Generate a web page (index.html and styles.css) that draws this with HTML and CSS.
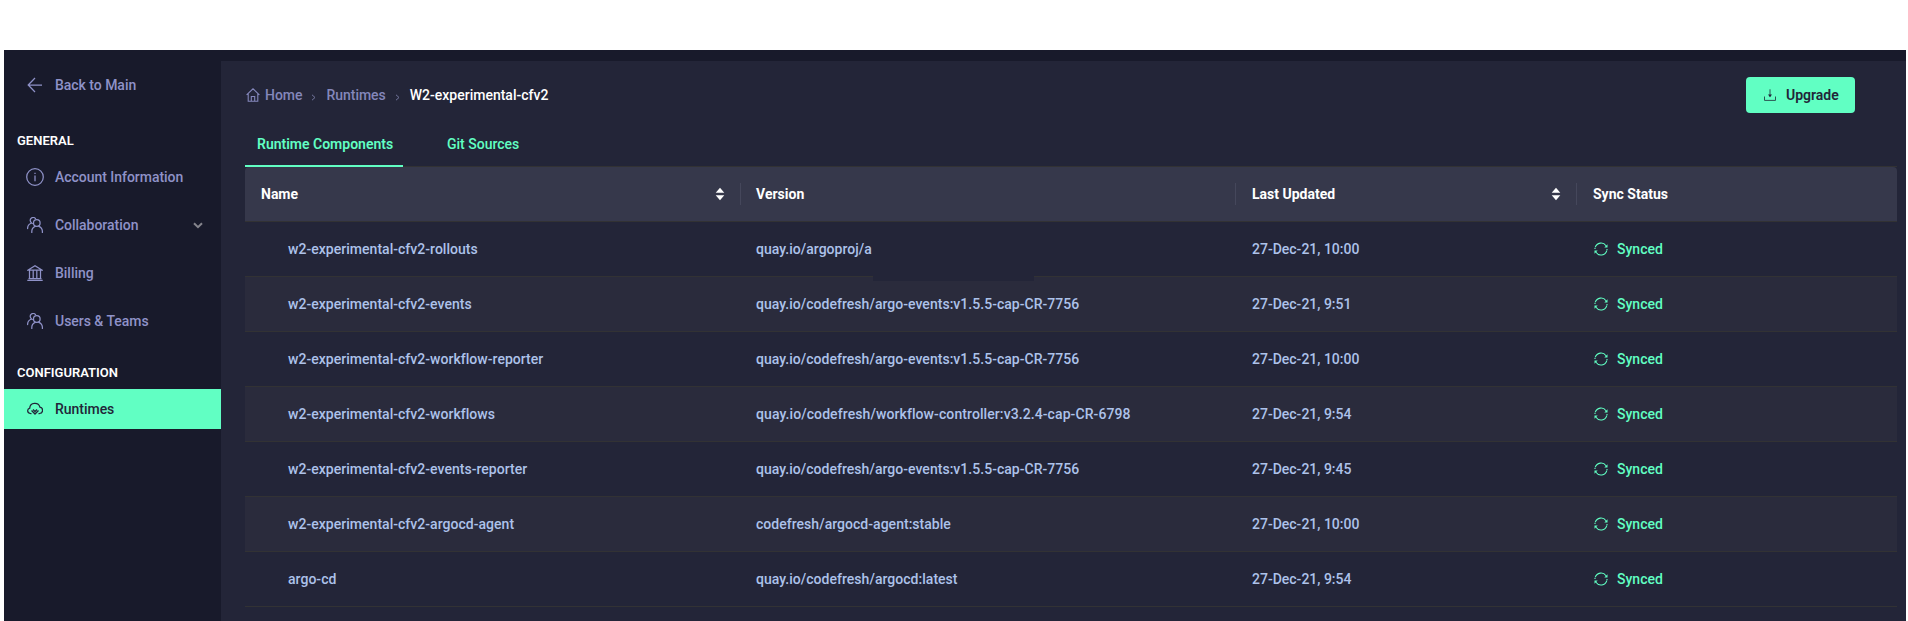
FILE: index.html
```html
<!DOCTYPE html>
<html lang="en">
<head>
<meta charset="utf-8">
<title>Runtimes</title>
<link rel="stylesheet" href="styles.css">
</head>
<body>
<svg class="defs" width="0" height="0">
  <symbol id="users" viewBox="0 0 16 16"><g fill="none" stroke="currentColor" stroke-width="1.25" stroke-linecap="round"><circle cx="9.8" cy="6" r="3.3"/><path d="M4.8 15.4v-.8c0-2.5 1.5-4.6 3.4-5.3M15.4 15.4v-.8c0-2.5-1.5-4.6-3.6-5.3M5.3 6.5C3 5.4 2.600 2.500 4.200 1.200C5.500.1 7.600.3 8.500 1.600M.6 11.500C.6 9 1.900 7.200 4 6.300"/></g></symbol>
  <symbol id="sync" viewBox="0 0 14 14"><g fill="none" stroke="currentColor" stroke-width="1.1"><path d="M1.300 5.200A6 6 0 0 1 12 3.700M12.800 8.700A6 6 0 0 1 2 10.300M1 6.900V5.700M13 7.100V8.300"/></g><path d="M13.500 2.300V5.500H10.300zM.5 11.700V8.500H3.700z" fill="currentColor"/></symbol>
  <symbol id="sort" viewBox="0 0 10 14"><path d="M5 .8L9.300 5.700H.7zM5 13.200L9.300 8.300H.7z" fill="currentColor"/></symbol>
</svg>
<div class="app">
  <nav class="sidebar">
    <a class="item back"><svg class="icon" viewBox="0 0 18 18"><path d="M16 9H2.500M9 2L2.200 9L9 16"/></svg><span>Back to Main</span></a>
    <h2 class="section general">GENERAL</h2>
    <a class="item"><svg class="icon" viewBox="0 0 18 18"><circle cx="9" cy="9" r="8.300"/><path d="M9 7.500V13.300M9 4.700V6"/></svg><span class="account">Account Information</span></a>
    <a class="item"><svg class="icon small"><use href="#users"/></svg><span>Collaboration</span><svg class="chevron" viewBox="0 0 10 7"><path d="M1 1.200L5 5.200L9 1.200"/></svg></a>
    <a class="item"><svg class="icon small" viewBox="0 0 16 16"><path d="M.3 15.400H15.700M1.500 13.500H14.500M2.500 5.500V13.500M6.200 5.500V13.500M9.800 5.500V13.500M13.500 5.500V13.500M.8 5.200H15.200L8 .8z"/></svg><span>Billing</span></a>
    <a class="item"><svg class="icon small"><use href="#users"/></svg><span>Users &amp; Teams</span></a>
    <h2 class="section config">CONFIGURATION</h2>
    <a class="item active"><svg class="icon small" viewBox="0 0 16 16"><path d="M4.500 12.500H3.500C.2 12.300-.4 8.300 2.700 7.200C3 1.200 11.500.8 12.900 6.200C16.700 6.900 16.300 12.300 12.500 12.500H11.500M4.500 9.500L8 13L11.500 9.500M6 8.500L8 10.500L10 8.500"/></svg><span>Runtimes</span></a>
  </nav>
  <main class="content">
    <header class="top">
      <div class="crumbs">
        <svg class="home" viewBox="0 0 14 14"><path d="M.6 6.800L7 .8L13.400 6.800M2.200 5.800V13.300H11.800V5.800M5.300 13V8.500H8.700V13"/></svg>
        <span class="crumb first">Home</span><svg class="sep" viewBox="0 0 5 7"><path d="M1 .8L4 3.500L1 6.200"/></svg>
        <span class="crumb second">Runtimes</span><svg class="sep" viewBox="0 0 5 7"><path d="M1 .8L4 3.500L1 6.200"/></svg>
        <span class="crumb current">W2-experimental-cfv2</span>
      </div>
      <button class="upgrade"><svg viewBox="0 0 12 12"><path d="M6 .3V7.500M.5 7.500V11.400H11.500V7.500"/><path class="tip" d="M4 5.500H8L6 8.200z"/></svg><span>Upgrade</span></button>
    </header>
    <div class="tabs"><a class="tab selected"><span>Runtime Components</span></a><a class="tab"><span>Git Sources</span></a></div>
    <div class="table">
      <div class="row head">
        <div class="cell"><span>Name</span><svg class="sort"><use href="#sort"/></svg></div>
        <div class="cell version"><span>Version</span></div>
        <div class="cell"><span>Last Updated</span><svg class="sort"><use href="#sort"/></svg></div>
        <div class="cell"><span>Sync Status</span></div>
      </div>
      <div class="row"><div class="cell name"><span>w2-experimental-cfv2-rollouts</span></div><div class="cell version"><span>quay.io/argoproj/a</span><i class="mask"></i></div><div class="cell date"><span>27-Dec-21, 10:00</span></div><div class="cell status"><svg><use href="#sync"/></svg><span>Synced</span></div></div>
      <div class="row"><div class="cell name"><span>w2-experimental-cfv2-events</span></div><div class="cell version"><span>quay.io/codefresh/argo-events:v1.5.5-cap-CR-7756</span></div><div class="cell date"><span>27-Dec-21, 9:51</span></div><div class="cell status"><svg><use href="#sync"/></svg><span>Synced</span></div></div>
      <div class="row"><div class="cell name"><span>w2-experimental-cfv2-workflow-reporter</span></div><div class="cell version"><span>quay.io/codefresh/argo-events:v1.5.5-cap-CR-7756</span></div><div class="cell date"><span>27-Dec-21, 10:00</span></div><div class="cell status"><svg><use href="#sync"/></svg><span>Synced</span></div></div>
      <div class="row"><div class="cell name"><span>w2-experimental-cfv2-workflows</span></div><div class="cell version controller"><span>quay.io/codefresh/workflow-controller:v3.2.4-cap-CR-6798</span></div><div class="cell date"><span>27-Dec-21, 9:54</span></div><div class="cell status"><svg><use href="#sync"/></svg><span>Synced</span></div></div>
      <div class="row"><div class="cell name"><span>w2-experimental-cfv2-events-reporter</span></div><div class="cell version"><span>quay.io/codefresh/argo-events:v1.5.5-cap-CR-7756</span></div><div class="cell date"><span>27-Dec-21, 9:45</span></div><div class="cell status"><svg><use href="#sync"/></svg><span>Synced</span></div></div>
      <div class="row"><div class="cell name"><span>w2-experimental-cfv2-argocd-agent</span></div><div class="cell version"><span>codefresh/argocd-agent:stable</span></div><div class="cell date"><span>27-Dec-21, 10:00</span></div><div class="cell status"><svg><use href="#sync"/></svg><span>Synced</span></div></div>
      <div class="row"><div class="cell name"><span>argo-cd</span></div><div class="cell version"><span>quay.io/codefresh/argocd:latest</span></div><div class="cell date"><span>27-Dec-21, 9:54</span></div><div class="cell status"><svg><use href="#sync"/></svg><span>Synced</span></div></div>
    </div>
  </main>
</div>
</body>
</html>
```
FILE: styles.css
```css
* { box-sizing: border-box; }
html, body { margin: 0; height: 100%; overflow: hidden; }
body { background: #fff; padding: 50px 2px 0 4px; font: 500 14px/20px Roboto, "Liberation Sans", sans-serif; color: #fff; }
.defs { display: none; }
svg { flex: none; }
.app { display: flex; height: 571px; background: #181a2b; }
.sidebar { width: 217px; padding-top: 15px; color: #8f92c8; }
.item { display: flex; align-items: center; height: 40px; margin-bottom: 8px; padding-left: 22px; letter-spacing: -.03px; }
.item.back { margin-bottom: 26px; }
.icon { width: 18px; height: 18px; margin-right: 11px; fill: none; stroke: currentColor; stroke-width: 1.25; }
.icon.small { width: 16px; height: 16px; margin: 0 12px 0 1px; }
.chevron { width: 10px; height: 7px; margin-left: auto; margin-right: 18px; fill: none; stroke: #85858d; stroke-width: 2; }
.section { margin: 0; padding-left: 13px; font-size: 13px; line-height: 20px; font-weight: 600; color: #fff; }
.general { margin-bottom: 6px; }
.config { margin: 22px 0 6px; }
.item.active { background: #61ffc3; color: #222538; }
.content { flex: 1; margin-top: 11px; padding: 16px 9px 0 24px; background: #232538; }
.top { display: flex; justify-content: space-between; height: 36px; padding-right: 42px; }
.crumbs { display: flex; align-items: center; color: #8487bb; }
.home { width: 14px; height: 14px; margin-right: 5px; margin-left: 1px; fill: none; stroke: currentColor; stroke-width: 1.1; }
.crumb { letter-spacing: -.03px; }
.sep { width: 5px; height: 7px; margin: 4px 10px 0 9px; fill: none; stroke: #73769d; }
.crumb.current { color: #fff; letter-spacing: 0; }
.upgrade { display: flex; align-items: center; width: 109px; height: 36px; padding: 0 0 0 18px; border: 0; border-radius: 4px; background: #61ffc3; color: #222538; font: 600 14px/20px Roboto, sans-serif; }
.upgrade svg { width: 12px; height: 12px; margin-right: 10px; fill: none; stroke: #2c5452; }
.upgrade .tip { fill: #222538; stroke: none; }
.tabs { display: flex; height: 54px; color: #61ffc3; margin-bottom: -1px; position: relative; }
.tab { padding: 21px 12px 0; margin-right: 32px; white-space: nowrap; }
.tab.selected { width: 158px; border-bottom: 2px solid #61ffc3; font-weight: 600; }
.table { border-top: 1px solid #323234; }
.row { display: grid; grid-template-columns: 496px 495px 341px 1fr; height: 55px; border-bottom: 1px solid #323234; }
.row:nth-child(odd) { background: #2a2b3c; }
.row.head { background: #36384b; border-radius: 4px 4px 0 0; font-weight: 700; }
.cell { display: flex; align-items: center; padding-left: 16px; color: #adc2ea; position: relative; }
.head .cell { justify-content: space-between; padding-right: 16px; color: #fff; }
.head .cell + .cell::before { content: ""; position: absolute; left: -1px; width: 1px; height: 22px; background: #45475b; }
.cell.name { padding-left: 43px; letter-spacing: .03px; }
.cell.version { padding-left: 15px; letter-spacing: .03px; }
.cell.controller { letter-spacing: .09px; }
.sort { width: 10px; height: 14px; }
.mask { position: absolute; left: 132px; top: 0; width: 161px; height: 59px; background: #232538; }
.cell.status { padding-left: 17px; color: #61ffc3; }
.cell.status svg { width: 14px; height: 14px; margin-right: 9px; }
```
